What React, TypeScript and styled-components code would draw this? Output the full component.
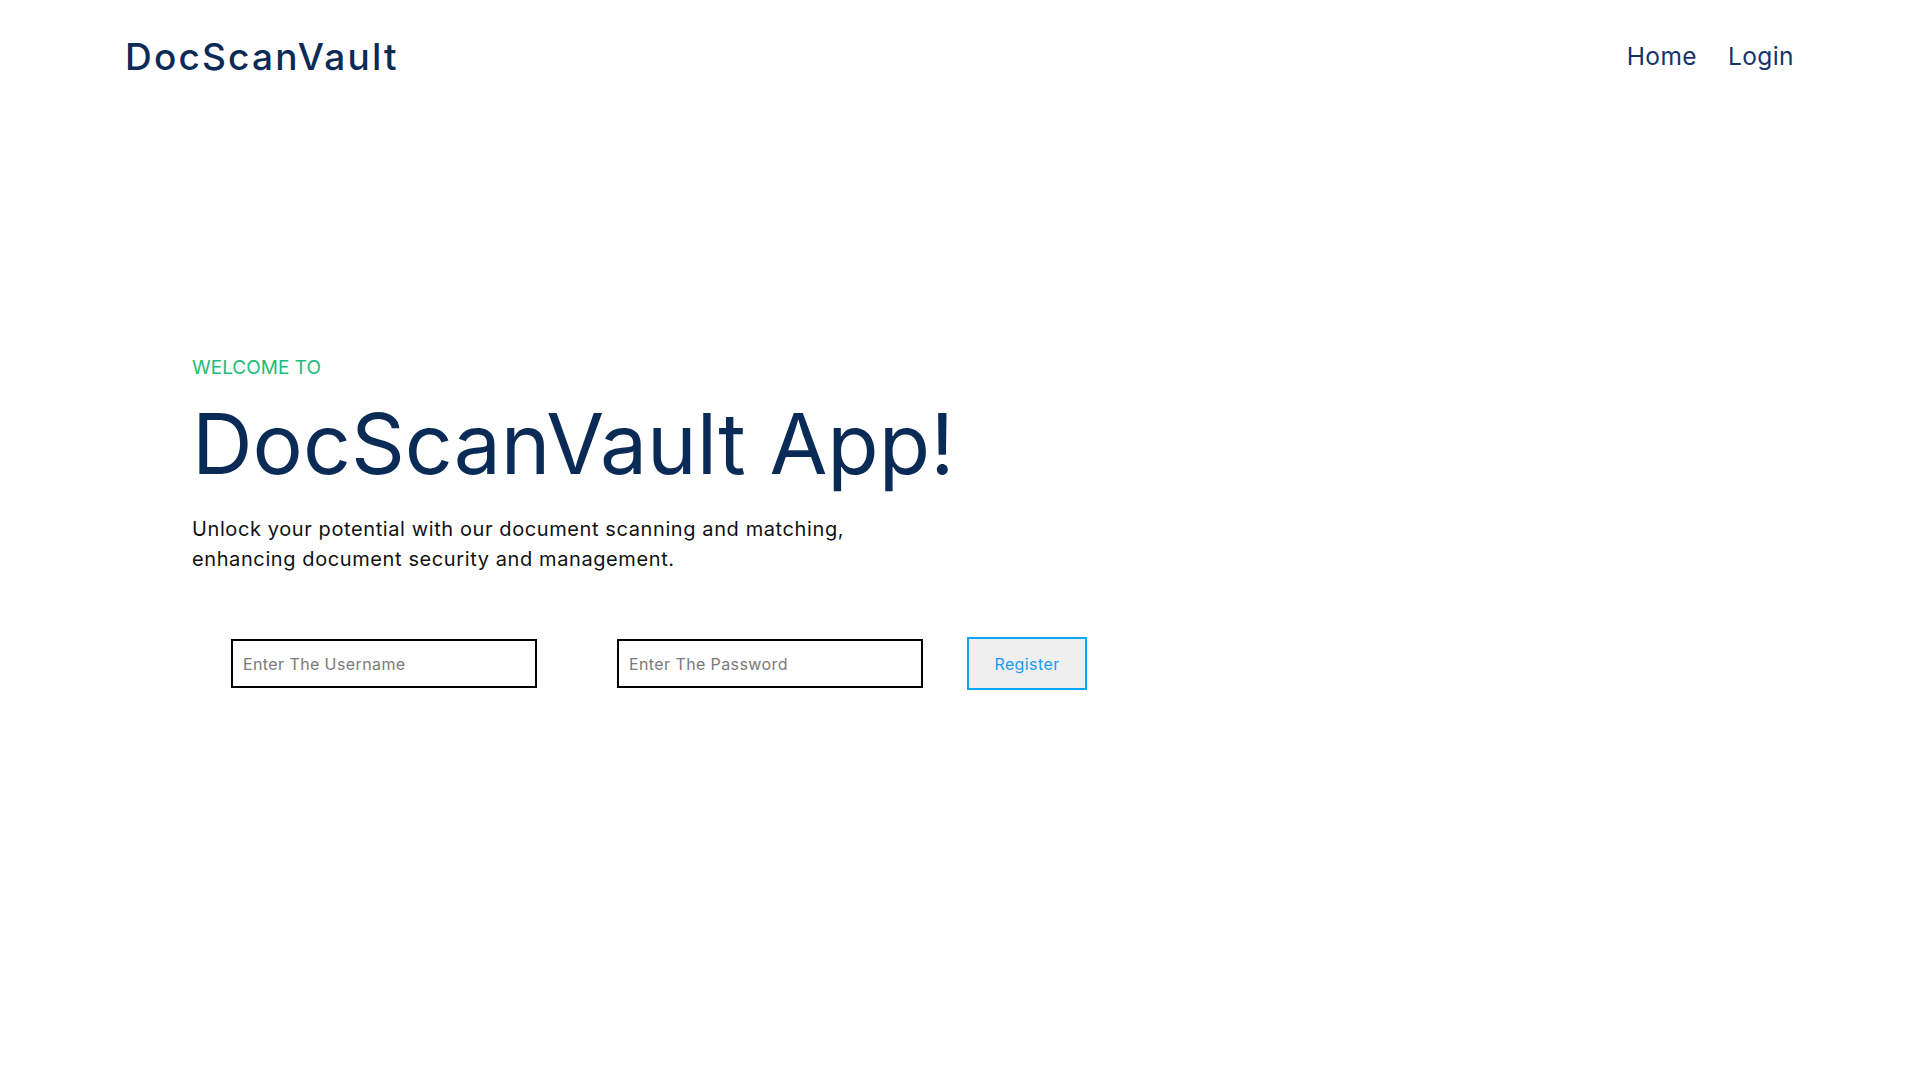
import React from "react";
import styled, { createGlobalStyle } from "styled-components";

const GlobalStyle = createGlobalStyle`
  * { box-sizing: border-box; }
  body {
    margin: 0;
    background: #ffffff;
    font-family: Inter, "Noto Sans", sans-serif;
  }
`;

const Page = styled.div`
  min-height: 1080px;
  background: #ffffff;
`;

const Header = styled.header`
  display: flex;
  justify-content: space-between;
  align-items: center;
  height: 112px;
  padding: 0 126px 0 125px;
`;

const Logo = styled.div`
  font-size: 37px;
  font-weight: 500;
  color: #0b2b57;
  letter-spacing: 2.2px;
`;

const Nav = styled.nav`
  display: flex;
  gap: 31px;
`;

const NavLink = styled.a`
  font-size: 24.5px;
  color: #14356a;
  text-decoration: none;
  letter-spacing: 0.4px;
  cursor: pointer;
`;

const Hero = styled.section`
  padding: 244px 0 0 192px;
  display: flex;
  flex-direction: column;
`;

const Eyebrow = styled.div`
  font-size: 19px;
  color: #1cbd78;
  line-height: 24px;
  text-transform: uppercase;
`;

const Title = styled.h1`
  margin: 14px 0 0;
  font-size: 84px;
  font-weight: 400;
  line-height: 100px;
  color: #0b2b57;
  letter-spacing: 0px;
`;

const Lead = styled.p`
  margin: 20px 0 0;
  font-size: 20px;
  line-height: 30px;
  color: #111111;
  letter-spacing: 0.6px;
  max-width: 720px;
`;

const Form = styled.form`
  display: flex;
  align-items: center;
  margin: 63px 0 0 39px;
`;

const Field = styled.input<{ $gap: number }>`
  width: 306px;
  height: 49px;
  border: 2px solid #000000;
  padding: 0 10px;
  font-family: inherit;
  font-size: 16px;
  letter-spacing: 0.4px;
  color: #333;
  margin-right: ${(p) => p.$gap}px;
  outline: none;
  &::placeholder {
    color: #7a7a7a;
  }
`;

const Button = styled.button`
  width: 120px;
  height: 53px;
  border: 2px solid #0aa6f5;
  background: #efefef;
  color: #1a9cf0;
  font-family: inherit;
  font-size: 16px;
  letter-spacing: 0.4px;
  cursor: pointer;
`;

export default function App() {
  return (
    <Page>
      <GlobalStyle />
      <Header>
        <Logo>DocScanVault</Logo>
        <Nav>
          <NavLink>Home</NavLink>
          <NavLink>Login</NavLink>
        </Nav>
      </Header>
      <Hero>
        <Eyebrow>Welcome To</Eyebrow>
        <Title>DocScanVault App!</Title>
        <Lead>
          Unlock your potential with our document scanning and matching,
          enhancing document security and management.
        </Lead>
        <Form onSubmit={(e) => e.preventDefault()}>
          <Field $gap={80} placeholder="Enter The Username" />
          <Field $gap={44} type="password" placeholder="Enter The Password" />
          <Button type="submit">Register</Button>
        </Form>
      </Hero>
    </Page>
  );
}
